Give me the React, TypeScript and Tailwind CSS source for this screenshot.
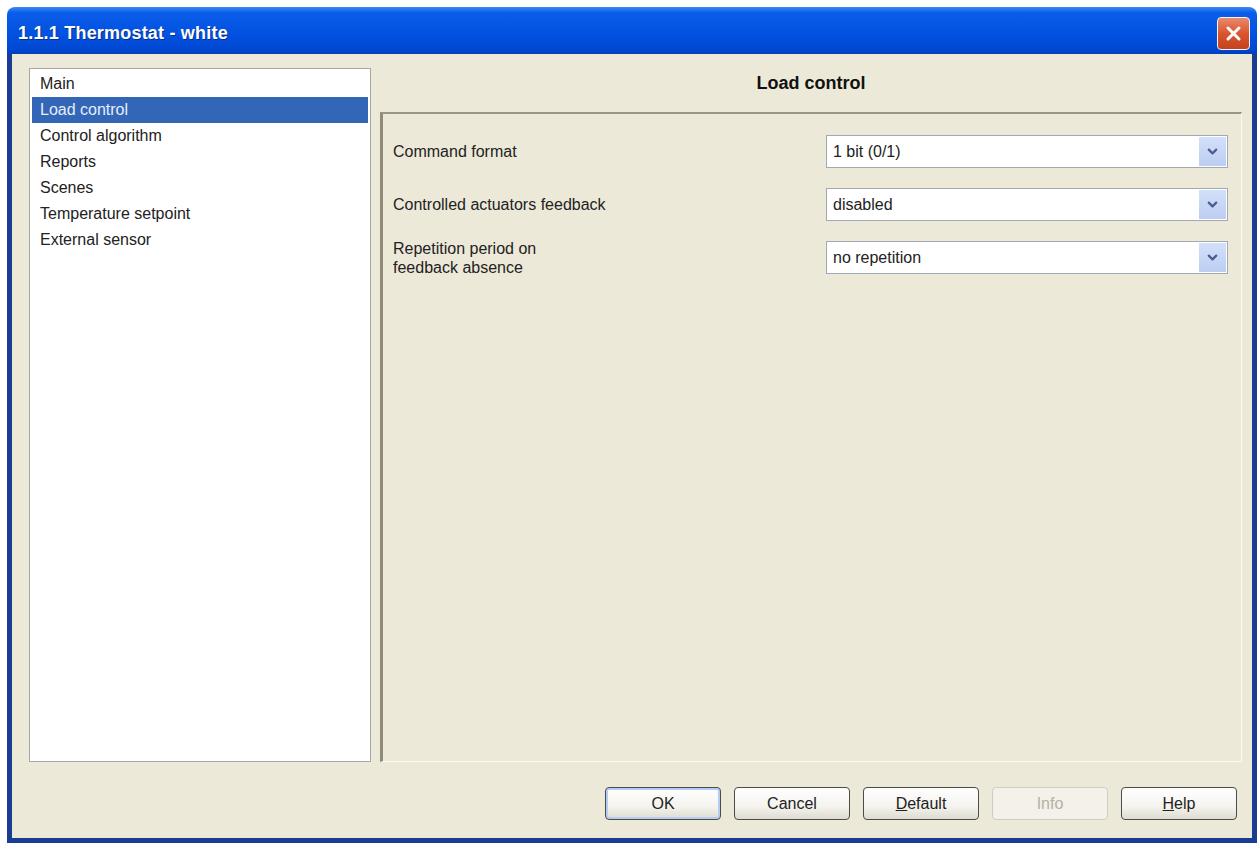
import { ChevronDown } from 'lucide-react'

const pages = [
  'Main',
  'Load control',
  'Control algorithm',
  'Reports',
  'Scenes',
  'Temperature setpoint',
  'External sensor',
]

const params = [
  { label: ['Command format'], value: '1 bit (0/1)' },
  { label: ['Controlled actuators feedback'], value: 'disabled' },
  { label: ['Repetition period on', 'feedback absence'], value: 'no repetition' },
]

function Combo({ value }: { value: string }) {
  return (
    <div className="w-[402px] h-[33px] flex items-stretch border border-[#a3a9b3] bg-white">
      <div className="flex-1 flex items-center pl-[6px] text-[16px] text-[#222]">{value}</div>
      <div className="w-[27px] my-[1px] mr-[1px] flex items-center justify-center bg-[linear-gradient(180deg,#d3e0fa_0%,#bccdf2_100%)]">
        <ChevronDown size={15} strokeWidth={3.5} className="text-[#4b5d8a]" />
      </div>
    </div>
  )
}

function Button({ children, primary, disabled }: { children: React.ReactNode; primary?: boolean; disabled?: boolean }) {
  return (
    <button
      className={`w-[116px] h-[33px] rounded-[4px] border text-[16px] flex items-center justify-center ${
        disabled
          ? 'border-[#cfcdc2] bg-[#f3f1e9] text-[#b3b0a4]'
          : 'border-[#4b4b48] bg-[linear-gradient(180deg,#ffffff_0%,#f4f3ee_60%,#dedbd0_100%)] text-[#222]'
      } ${primary ? 'shadow-[inset_0_0_0_2px_#b6cbf3]' : ''}`}
    >
      {children}
    </button>
  )
}

export default function App() {
  return (
    <div className="w-[1259px] h-[848px] bg-white pt-[7px] pl-[7px] font-['Liberation_Sans',Arial,sans-serif]">
      <div className="w-[1250px] h-[836px] flex flex-col rounded-t-[8px] overflow-hidden">
        {/* Title bar */}
        <div className="h-[47px] flex items-start pt-[10px] pl-[11px] pr-[7px] bg-[linear-gradient(180deg,#3b8bf5_0%,#0a5de9_12%,#0251e0_60%,#0048d2_90%,#003fb8_100%)]">
          <div className="flex-1 h-[33px] flex items-center text-white font-bold text-[18px] tracking-[0.2px] [text-shadow:1px_1px_0_#0a2f8a]">
            1.1.1 Thermostat - white
          </div>
          <div className="w-[33px] h-[33px] rounded-[4px] border border-[#f4f4f4] bg-[linear-gradient(180deg,#e98a6c_0%,#d9552f_50%,#c4421e_100%)] flex items-center justify-center">
            <svg width="17" height="17" viewBox="0 0 17 17">
              <path d="M3 3 L14 14 M14 3 L3 14" stroke="#fff" strokeWidth="3" strokeLinecap="round" />
            </svg>
          </div>
        </div>

        {/* Body */}
        <div className="flex-1 flex flex-col bg-[#ece9d8] border-x-[5px] border-b-[5px] border-[#1a3c92]">
          <div className="h-[708px] flex pl-[17px] pr-[10px]">
            {/* Page list */}
            <div className="mt-[14px] w-[342px] h-[694px] bg-white border border-[#a7a6a0] pt-[2px]">
              {pages.map((p) => (
                <div
                  key={p}
                  className={`h-[26px] mx-[2px] pl-[8px] flex items-center text-[16px] ${
                    p === 'Load control' ? 'bg-[#3466b7] text-[#e6eefc]' : 'text-[#222]'
                  }`}
                >
                  {p}
                </div>
              ))}
            </div>

            {/* Parameter panel */}
            <div className="ml-[9px] flex-1 flex flex-col">
              <div className="h-[58px] flex items-center justify-center font-bold text-[18px] text-[#111]">
                Load control
              </div>
              <div className="flex-1 border-t-[2px] border-l-[3px] border-t-[#9a9684] border-l-[#8f8b79] border-r border-b border-r-[#fbfaf5] border-b-[#fbfaf5] pt-[21px] pl-[10px] pr-[13px] flex flex-col gap-[20px]">
                {params.map((row) => (
                  <div key={row.value} className="h-[33px] flex items-center justify-between">
                    <div className="text-[16px] leading-[19px] text-[#222]">
                      {row.label.map((l) => (
                        <div key={l}>{l}</div>
                      ))}
                    </div>
                    <Combo value={row.value} />
                  </div>
                ))}
              </div>
            </div>
          </div>

          {/* Buttons */}
          <div className="mt-[25px] flex justify-end gap-[13px] pr-[15px]">
            <Button primary>OK</Button>
            <Button>Cancel</Button>
            <Button>
              <span className="underline">D</span>efault
            </Button>
            <Button disabled>Info</Button>
            <Button>
              <span className="underline">H</span>elp
            </Button>
          </div>
        </div>
      </div>
    </div>
  )
}
